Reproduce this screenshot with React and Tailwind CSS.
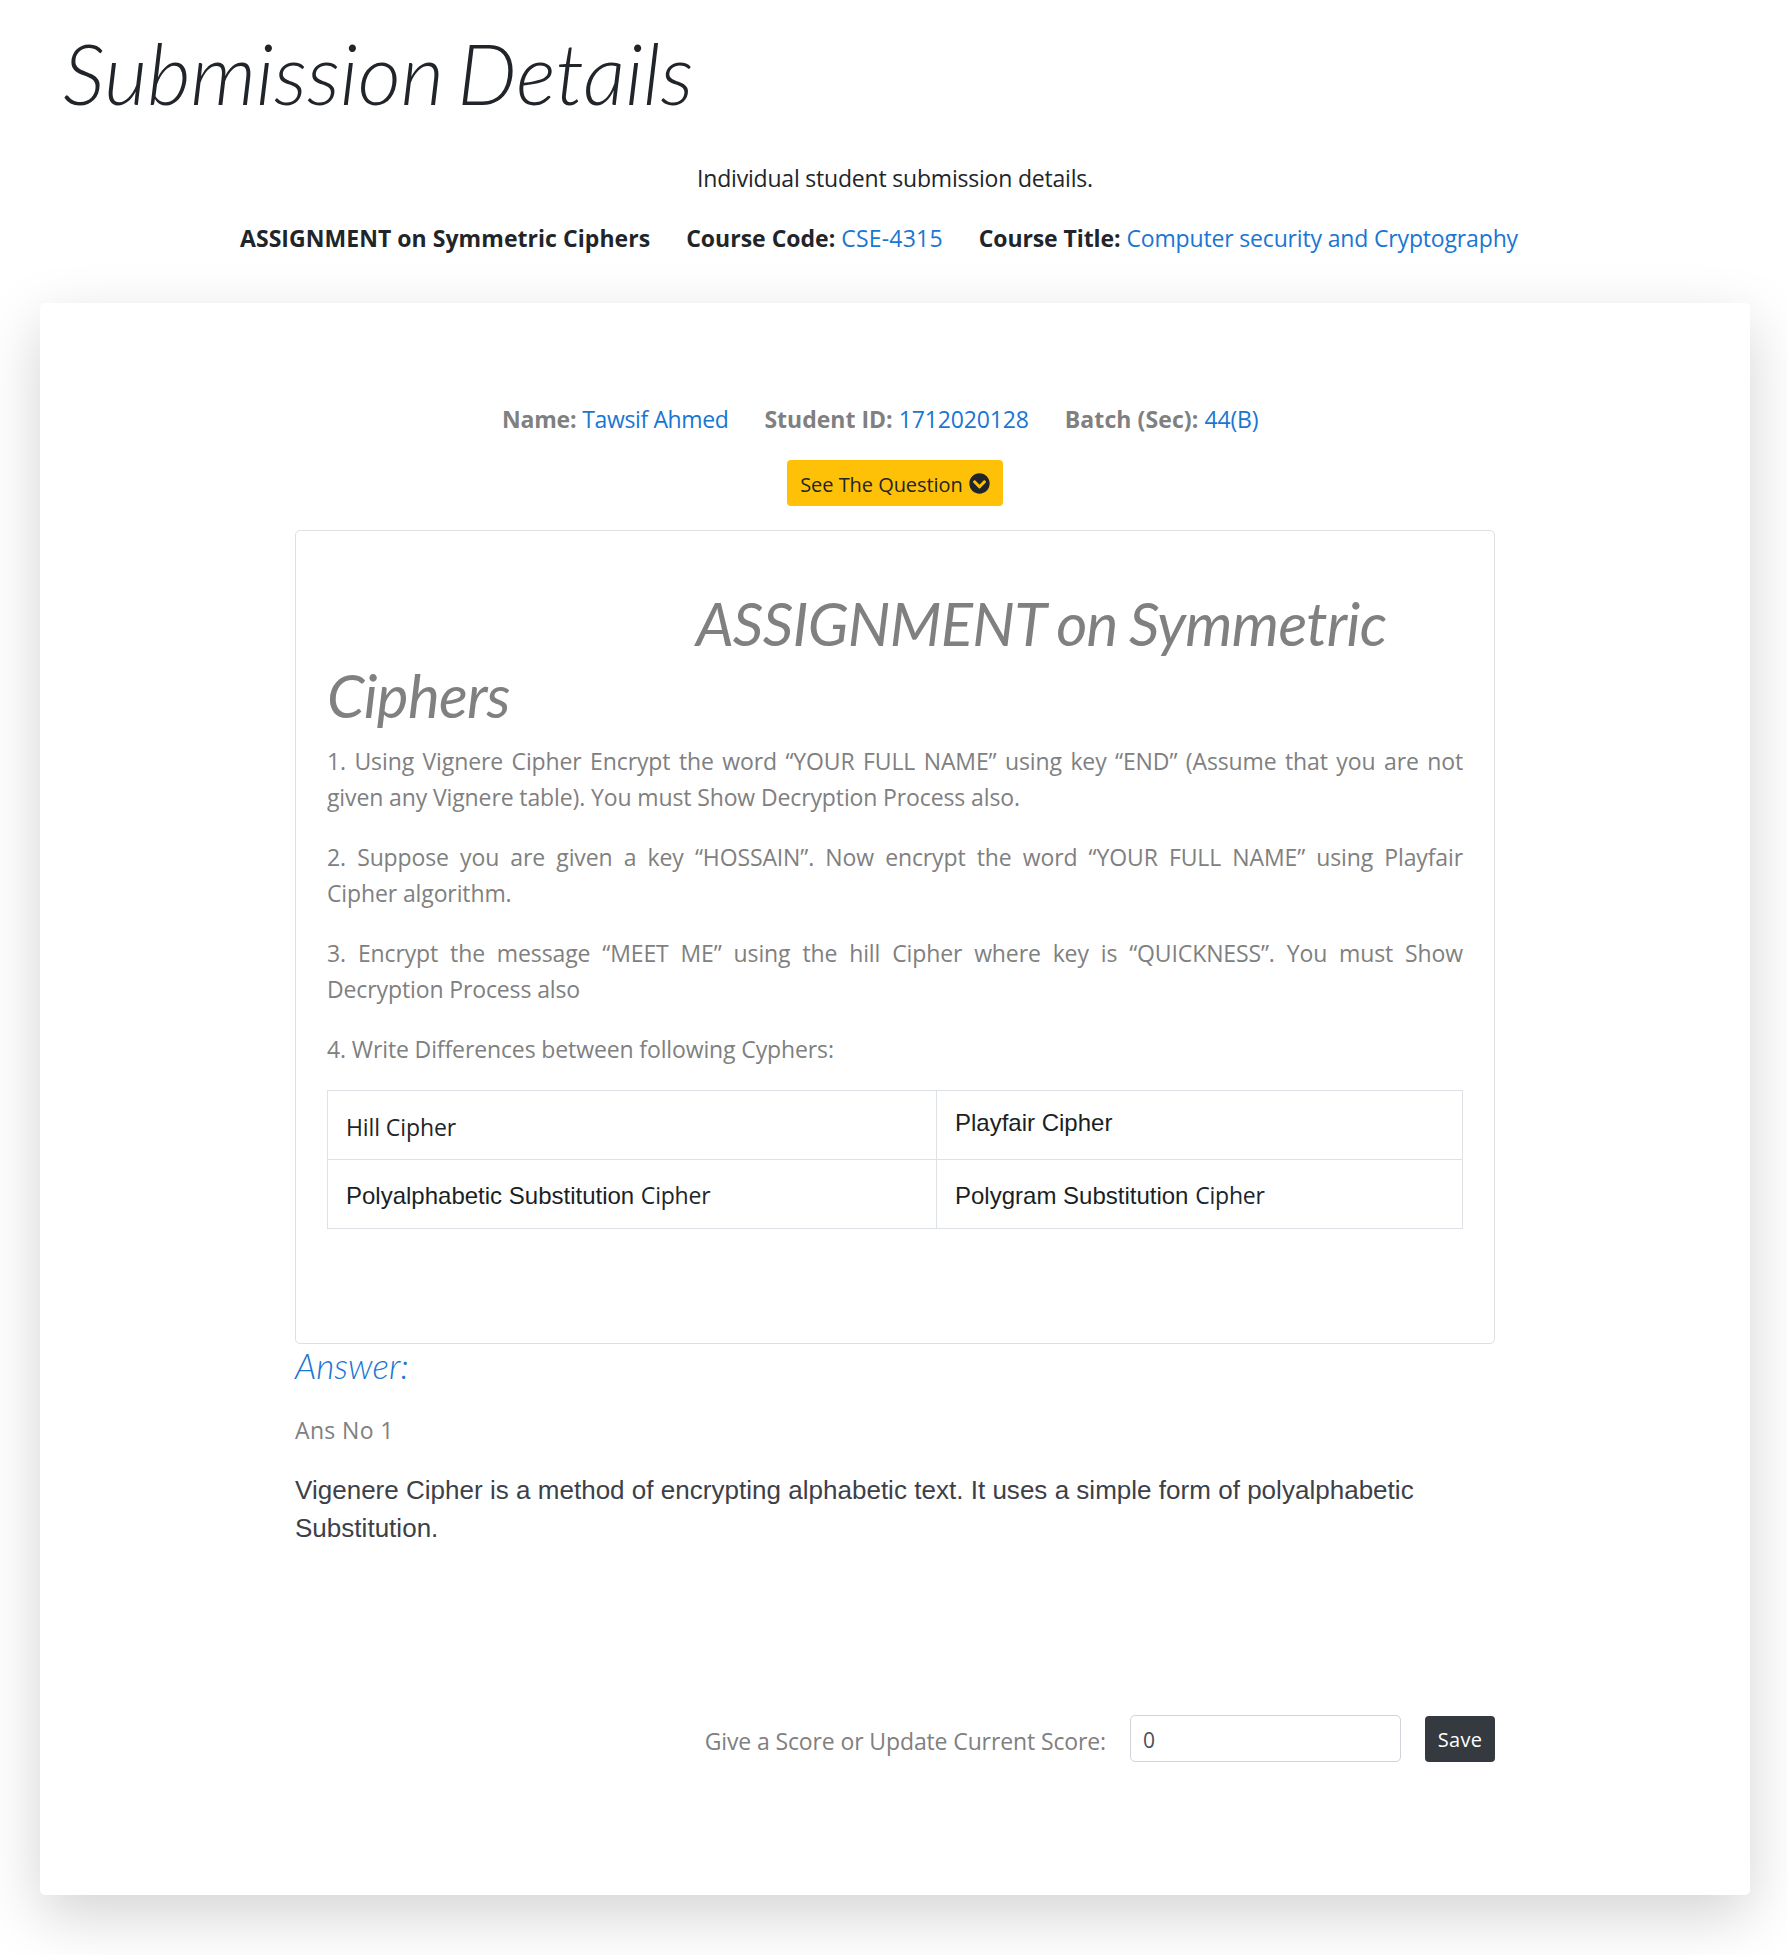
import React from "react";
import { FaChevronCircleDown } from "react-icons/fa";

function Field({ label, value, labelClass = "", valueClass = "tracking-[-0.14px]" }) {
  return (
    <div className="flex gap-[6px] whitespace-nowrap">
      <b className={`font-bold ${labelClass}`}>{label}</b>
      {value && <span className={`text-[#1976d2] ${valueClass}`}>{value}</span>}
    </div>
  );
}

function Question({ first, rest }) {
  return (
    <p className="mb-6 whitespace-nowrap tracking-[-0.12px]">
      {rest && <span className="block [text-align-last:justify]">{first}</span>}
      <span className="block">{rest || first}</span>
    </p>
  );
}

const arial = "font-['Liberation_Sans',Arial,sans-serif] text-2xl leading-9 text-[#1b1f24]";

export default function App() {
  return (
    <div className="h-[1955px] w-full overflow-hidden bg-white pt-[25px] font-['Open_Sans','Noto_Sans',sans-serif] text-[23px] leading-9 text-[#212529]">
      <h1 className="ml-[63px] font-[Lato,sans-serif] text-[84px] leading-[96px] font-light whitespace-nowrap italic [word-spacing:-8px]">
        Submission Details
      </h1>
      <div className="ml-10 w-[1710px]">
        <p className="mt-[39px] text-center tracking-[-0.2px]">Individual student submission details.</p>
        <div className="mt-6 ml-[200px] flex gap-[36px]">
          <Field label="ASSIGNMENT on Symmetric Ciphers" labelClass="tracking-[0.05px]" />
          <Field label="Course Code:" value="CSE-4315" valueClass="tracking-[0.2px]" />
          <Field
            label="Course Title:"
            value="Computer security and Cryptography"
            labelClass="tracking-[-0.1px]"
            valueClass="tracking-[-0.16px]"
          />
        </div>

        <main className="mt-[47px] h-[1592px] rounded-[5px] bg-white px-[255px] pt-[98px] text-[#808080] shadow-[0_20px_60px_rgba(0,0,0,0.175)]">
          <div className="ml-[207px] flex gap-[36px]">
            <Field
              label="Name:"
              value="Tawsif Ahmed"
              labelClass="tracking-[-0.2px]"
              valueClass="tracking-[-0.38px]"
            />
            <Field label="Student ID:" value="1712020128" />
            <Field label="Batch (Sec):" value="44(B)" labelClass="tracking-[0.1px]" />
          </div>
          <button className="mx-auto mt-[23px] flex h-[46px] w-[216px] items-center justify-center gap-[6px] rounded-[4px] bg-[#ffc107] text-[20px] text-[#212529]">
            <span className="pt-[3px] whitespace-nowrap tracking-[-0.05px]">See The Question</span>
            <FaChevronCircleDown className="mt-px size-[21px]" />
          </button>

          <section className="mt-6 h-[814px] rounded-[5px] border border-[#dfdfdf] px-[31px] pt-[56px]">
            <h2 className="mb-3 font-[Lato,sans-serif] text-[60px] leading-[72px] tracking-[-0.7px] italic indent-[369px] [word-spacing:-2px]">
              ASSIGNMENT on Symmetric Ciphers
            </h2>
            <Question
              first="1. Using Vignere Cipher Encrypt the word “YOUR FULL NAME” using key “END” (Assume that you are not"
              rest="given any Vignere table). You must Show Decryption Process also."
            />
            <Question
              first="2. Suppose you are given a key “HOSSAIN”. Now encrypt the word “YOUR FULL NAME” using Playfair"
              rest="Cipher algorithm."
            />
            <Question
              first="3. Encrypt the message “MEET ME” using the hill Cipher where key is “QUICKNESS”. You must Show"
              rest="Decryption Process also"
            />
            <Question first="4. Write Differences between following Cyphers:" />
            <table className="mt-[-1px] w-full table-fixed border-collapse text-[#212529]">
              <tbody>
                <tr className="h-[69px]">
                  <td className="w-[609px] border border-[#dee2e6] pt-[3px] pl-[18px] tracking-[-0.1px]">Hill Cipher</td>
                  <td className={`border border-[#dee2e6] pb-[4px] pl-[18px] ${arial}`}>Playfair Cipher</td>
                </tr>
                <tr className="h-[69px]">
                  <td className="border border-[#dee2e6] pt-[3px] pl-[18px]">
                    <span className={arial}>Polyalphabetic Substitution </span>
                    <span className="tracking-[-0.2px]">Cipher</span>
                  </td>
                  <td className="border border-[#dee2e6] pt-[3px] pl-[18px]">
                    <span className={arial}>Polygram Substitution </span>
                    <span className="tracking-[-0.2px]">Cipher</span>
                  </td>
                </tr>
              </tbody>
            </table>
          </section>

          <h3 className="font-[Lato,sans-serif] text-[35px] leading-[42px] font-light text-[#1976d2] italic">Answer:</h3>
          <p className="mt-[26px] tracking-[0.35px]">Ans No 1</p>
          <p className="mt-[24px] font-['Liberation_Sans',Arial,sans-serif] text-[26px] leading-[37.5px] tracking-[0.02px] text-[#3c4048]">
            Vigenere Cipher is a method of encrypting alphabetic text. It uses a simple form of polyalphabetic
            <br />
            Substitution.
          </p>

          <form className="mt-[168px] flex h-[47px] items-center justify-end">
            <label className="mt-[4px] mr-[24px] tracking-[-0.12px]">Give a Score or Update Current Score:</label>
            <input
              defaultValue="0"
              className="h-[47px] w-[271px] rounded-[5px] border border-[#ced4da] bg-white px-[12px] pt-[3px] text-[21px] text-[#495057]"
            />
            <button
              type="button"
              className="ml-6 h-[46px] w-[70px] rounded-[4px] bg-[#343a40] pt-[2px] text-[20px] tracking-[0.3px] text-white"
            >
              Save
            </button>
          </form>
        </main>
      </div>
    </div>
  );
}
